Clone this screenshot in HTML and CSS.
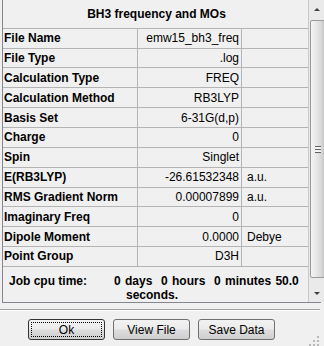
FILE: index.html
```html
<!DOCTYPE html>
<html lang="en">
<head>
    <meta charset="UTF-8">
    <title>BH3 frequency and MOs</title>
    <link rel="stylesheet" href="styles.css">
</head>
<body>
    <div class="panel">
        <div class="table-area">
            <div class="title">BH3 frequency and MOs</div>
            <div class="row"><div class="label">File Name</div><div class="value">emw15_bh3_freq</div><div class="unit"></div></div>
            <div class="row"><div class="label">File Type</div><div class="value">.log</div><div class="unit"></div></div>
            <div class="row"><div class="label">Calculation Type</div><div class="value">FREQ</div><div class="unit"></div></div>
            <div class="row"><div class="label">Calculation Method</div><div class="value">RB3LYP</div><div class="unit"></div></div>
            <div class="row"><div class="label">Basis Set</div><div class="value">6-31G(d,p)</div><div class="unit"></div></div>
            <div class="row"><div class="label">Charge</div><div class="value">0</div><div class="unit"></div></div>
            <div class="row"><div class="label">Spin</div><div class="value">Singlet</div><div class="unit"></div></div>
            <div class="row"><div class="label">E(RB3LYP)</div><div class="value">-26.61532348</div><div class="unit">a.u.</div></div>
            <div class="row"><div class="label">RMS Gradient Norm</div><div class="value">0.00007899</div><div class="unit">a.u.</div></div>
            <div class="row"><div class="label">Imaginary Freq</div><div class="value">0</div><div class="unit"></div></div>
            <div class="row"><div class="label">Dipole Moment</div><div class="value">0.0000</div><div class="unit">Debye</div></div>
            <div class="row"><div class="label">Point Group</div><div class="value">D3H</div><div class="unit"></div></div>
            <div class="cpu">
                <div class="cpu-label">Job cpu time:</div>
                <div class="cpu-value">0 days&nbsp; 0 hours&nbsp; 0 minutes 50.0 seconds.</div>
            </div>
        </div>
        <div class="scrollbar">
            <div class="arrow arrow-up"></div>
            <div class="thumb"><span class="grip"></span></div>
            <div class="arrow arrow-down"></div>
        </div>
    </div>
    <div class="separator"></div>
    <div class="buttons">
        <button class="btn btn-default"><span>Ok</span></button>
        <button class="btn"><span>View File</span></button>
        <button class="btn"><span>Save Data</span></button>
    </div>
    <div class="footer">
        <svg class="size-grip" width="10" height="10" viewBox="0 0 10 10">
            <rect x="8" y="0" width="2" height="2" fill="#b8b8b8"/>
            <rect x="4" y="4" width="2" height="2" fill="#b8b8b8"/>
            <rect x="8" y="4" width="2" height="2" fill="#b8b8b8"/>
            <rect x="0" y="8" width="2" height="2" fill="#b8b8b8"/>
            <rect x="4" y="8" width="2" height="2" fill="#b8b8b8"/>
            <rect x="8" y="8" width="2" height="2" fill="#b8b8b8"/>
        </svg>
    </div>
    <div class="frame-bottom"></div>
</body>
</html>
```

FILE: styles.css
```css
body
{
    margin: 0;
    width: 324px;
    height: 346px;
    overflow: hidden;
    background: #f0f0f0;
    font-family: "Liberation Sans", Arial, sans-serif;
    font-size: 12px;
    color: black;
}
.panel
{
    display: flex;
    margin-left: 2px;
    width: 317px;
    height: 302px;
    border: 1px solid #828790;
    border-top: none;
}
.table-area
{
    flex: 1;
    display: flex;
    flex-direction: column;
}
.title
{
    height: 28px;
    border-bottom: 1px solid #b4b4b4;
    display: flex;
    align-items: center;
    justify-content: center;
    font-weight: bold;
    padding-left: 2px;
}
.row
{
    display: grid;
    grid-template-columns: 135px 104px 1fr;
    height: 19px;
    border-bottom: 1px solid #b4b4b4;
}
.label, .value, .unit
{
    display: flex;
    align-items: center;
    white-space: nowrap;
}
.label
{
    font-weight: bold;
    padding-left: 1px;
    border-right: 1px solid #b4b4b4;
}
.value
{
    justify-content: flex-end;
    padding-right: 2px;
    border-right: 1px solid #b4b4b4;
}
.unit
{
    padding-left: 5px;
}
.cpu
{
    display: flex;
    font-weight: bold;
    padding-top: 7px;
    line-height: 14px;
}
.cpu-label
{
    width: 105px;
    padding-left: 6px;
}
.cpu-value
{
    width: 182px;
    padding-left: 12px;
    text-indent: -12px;
    word-spacing: 1px;
}
.scrollbar
{
    width: 17px;
    border-left: 1px solid #c8c8c8;
    background: #eaeaea;
    display: flex;
    flex-direction: column;
    align-items: center;
}
.arrow
{
    height: 19px;
    width: 17px;
    position: relative;
}
.arrow::after
{
    content: "";
    position: absolute;
    left: 5px;
    border-left: 3px solid transparent;
    border-right: 3px solid transparent;
}
.arrow-up::after
{
    top: 8px;
    border-bottom: 3px solid #404040;
}
.arrow-down
{
    height: 22px;
}
.arrow-down::after
{
    top: 12px;
    border-top: 3px solid #404040;
}
.thumb
{
    width: 13px;
    flex: 1;
    margin: 1px 0 2px;
    border: 1px solid #9a9a9a;
    border-radius: 2px;
    background: linear-gradient(to right, #f4f4f4, #e8e8e8 40%, #d4d4d4 85%, #c4c4c4);
    display: flex;
    align-items: center;
    justify-content: center;
}
.grip
{
    width: 6px;
    height: 5px;
    border-top: 1px solid #606060;
    border-bottom: 1px solid #606060;
    background: linear-gradient(#f4f4f4 2px, #606060 2px, #606060 3px, #f4f4f4 3px);
}
.separator
{
    margin-top: 6px;
    width: 320px;
    border-top: 1px solid #a0a0a0;
    border-bottom: 1px solid #ffffff;
    box-sizing: border-box;
    height: 2px;
}
.buttons
{
    display: flex;
    gap: 8px;
    padding: 8px 0 0 28px;
}
.btn
{
    width: 77px;
    height: 21px;
    padding: 2px;
    border: 1px solid #707070;
    border-radius: 3px;
    background: linear-gradient(#f2f2f2, #ebebeb 48%, #dddddd 52%, #cfcfcf);
    font-family: "Liberation Sans", Arial, sans-serif;
    font-size: 12px;
    color: black;
    box-sizing: border-box;
}
.btn span
{
    display: flex;
    align-items: center;
    justify-content: center;
    height: 100%;
}
.btn-default
{
    border-color: #333333;
}
.btn-default span
{
    outline: 1px dotted #000000;
    outline-offset: -1px;
}
.footer
{
    display: flex;
    justify-content: flex-end;
    padding-right: 5px;
    height: 6px;
}
.size-grip
{
    margin-top: -4px;
}
.frame-bottom
{
    margin-top: 1px;
    height: 3px;
    background: #3a3a3a;
}
```
